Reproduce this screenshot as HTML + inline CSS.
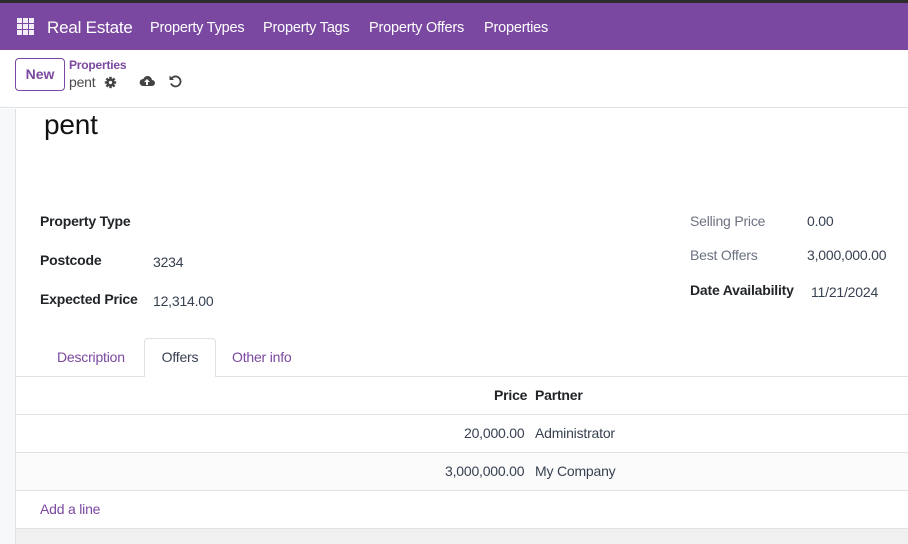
<!DOCTYPE html>
<html><head><meta charset="utf-8"><style>
*{margin:0;padding:0;box-sizing:border-box}
body{width:908px;height:544px;overflow:hidden;font-family:"Liberation Sans",sans-serif;font-size:14px;color:#374151;background:#fff;position:relative}
.top{position:absolute;left:0;top:0;width:908px;height:3px;background:#2c2c2c}
.nav{position:absolute;left:0;top:3px;width:908px;height:47px;background:#7a48a0;color:#fff}
.nav span{position:absolute;top:17px;font-size:14.5px;letter-spacing:-0.2px}
.grid{position:absolute;left:17px;top:15px;width:17px;height:17px;display:grid;grid-template-columns:repeat(3,5px);gap:1px}
.grid i{background:#fff;display:block;height:5px;opacity:.9}
.cp{position:absolute;top:50px;left:0;width:908px;height:58px;border-bottom:1px solid #dee2e6}
.btn{position:absolute;left:15px;top:8px;width:50px;height:33px;border:1px solid #7a48a0;border-radius:4px;color:#7a48a0;font-size:14px;font-weight:bold;text-align:center;line-height:31px}
.left{position:absolute;left:0;top:109px;width:16px;height:435px;background:#f7f8fa;border-right:1px solid #dee2e6}
.purple{color:#7a48a0}
.abs{position:absolute;letter-spacing:-0.2px}
.lbl{font-weight:bold;color:#212529}
.row{position:absolute;left:16px;width:892px;border-top:1px solid #dee2e6}
</style></head><body>
<div class="top"></div>
<div class="nav">
<div class="grid"><i></i><i></i><i></i><i></i><i></i><i></i><i></i><i></i><i></i></div>
<span style="left:47px;font-size:17px;top:15px">Real Estate</span>
<span style="left:150px">Property Types</span>
<span style="left:263px">Property Tags</span>
<span style="left:369px">Property Offers</span>
<span style="left:484px">Properties</span>
</div>
<div class="cp">
<div class="btn">New</div>
<div class="abs purple" style="left:69px;top:8px;font-size:12px;font-weight:bold">Properties</div>
<div class="abs" style="left:69px;top:24px;font-size:14px;color:#4a4a4a">pent</div>
<svg class="abs" style="left:104px;top:26px" width="13" height="13" viewBox="0 0 16 16"><g stroke="#444" stroke-width="3"><line x1="8" y1="1" x2="8" y2="15"/><line x1="1" y1="8" x2="15" y2="8"/><line x1="3" y1="3" x2="13" y2="13"/><line x1="13" y1="3" x2="3" y2="13"/></g><circle cx="8" cy="8" r="5" fill="#444"/><circle cx="8" cy="8" r="2" fill="#fff"/></svg>
<svg class="abs" style="left:139px;top:24px" width="16" height="13" viewBox="0 0 16 13"><path d="M4 12h9a3 3 0 0 0 0-6A4.5 4.5 0 0 0 4.3 5 3.5 3.5 0 0 0 4 12z" fill="#444"/><path d="M8 5l-3 3h2v3h2V8h2z" fill="#fff"/></svg>
<svg class="abs" style="left:168px;top:24px" width="14" height="14" viewBox="0 0 14 14"><path d="M3.5 4.5A5 5 0 1 1 3 9.5" fill="none" stroke="#444" stroke-width="1.8"/><path d="M1.5 1.5v4.5h4.5z" fill="#444"/></svg>
</div>
<div class="left"></div>
<div class="abs" style="left:44px;top:109px;font-size:28px;color:#111">pent</div>
<div class="abs lbl" style="left:40px;top:213px">Property Type</div>
<div class="abs lbl" style="left:40px;top:252px">Postcode</div>
<div class="abs" style="left:153px;top:254px">3234</div>
<div class="abs lbl" style="left:40px;top:291px">Expected Price</div>
<div class="abs" style="left:153px;top:293px">12,314.00</div>
<div class="abs" style="left:690px;top:213px;color:#6b7280">Selling Price</div>
<div class="abs" style="left:807px;top:213px">0.00</div>
<div class="abs" style="left:690px;top:247px;color:#6b7280">Best Offers</div>
<div class="abs" style="left:807px;top:247px">3,000,000.00</div>
<div class="abs lbl" style="left:690px;top:282px">Date Availability</div>
<div class="abs" style="left:811px;top:284px">11/21/2024</div>
<div class="abs purple" style="left:57px;top:349px">Description</div>
<div class="abs" style="left:144px;top:338px;width:72px;height:39px;border:1px solid #dee2e6;border-bottom:none;border-radius:4px 4px 0 0;background:#fff;z-index:2;text-align:center;padding-top:10px;color:#374151">Offers</div>
<div class="abs purple" style="left:232px;top:349px">Other info</div>
<div class="row" style="top:376px;height:38px"></div>
<div class="abs lbl" style="left:494px;top:387px">Price</div>
<div class="abs lbl" style="left:535px;top:387px">Partner</div>
<div class="row" style="top:414px;height:38px"></div>
<div class="abs" style="left:464px;top:425px">20,000.00</div>
<div class="abs" style="left:535px;top:425px">Administrator</div>
<div class="row" style="top:452px;height:38px;background:#fbfbfb"></div>
<div class="abs" style="left:445px;top:463px">3,000,000.00</div>
<div class="abs" style="left:535px;top:463px">My Company</div>
<div class="row" style="top:490px;height:38px"></div>
<div class="abs purple" style="left:40px;top:501px">Add a line</div>
<div class="row" style="top:528px;height:16px;background:#f0f0f0"></div>
</body></html>
